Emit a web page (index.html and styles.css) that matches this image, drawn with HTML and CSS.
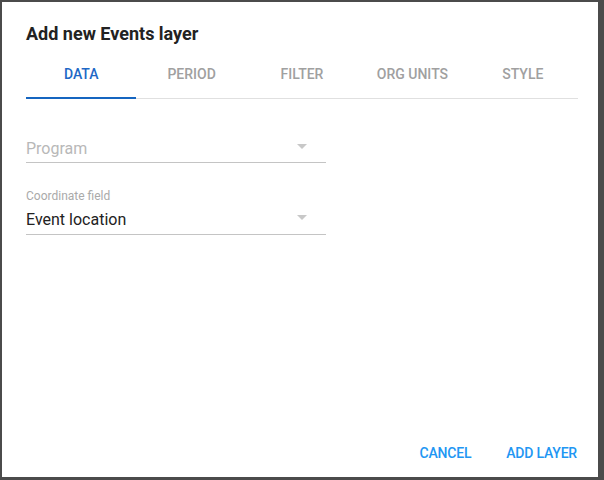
FILE: index.html
```html
<!DOCTYPE html>
<html>
<head>
<meta charset="utf-8">
<link rel="stylesheet" href="styles.css">
</head>
<body>
<div class="backdrop">
  <div class="dialog">
    <h1 class="title">Add new Events layer</h1>
    <div class="tabs">
      <div class="tab active">DATA</div>
      <div class="tab">PERIOD</div>
      <div class="tab">FILTER</div>
      <div class="tab">ORG UNITS</div>
      <div class="tab">STYLE</div>
    </div>
    <div class="content">
      <div class="field">
        <div class="select">
          <span class="placeholder">Program</span>
          <svg class="arrow" width="10" height="5" viewBox="0 0 10 5"><path d="M0 0h10L5 5z" fill="#c8c8c8"/></svg>
        </div>
      </div>
      <div class="field labelled">
        <div class="label">Coordinate field</div>
        <div class="select">
          <span class="value">Event location</span>
          <svg class="arrow" width="10" height="5" viewBox="0 0 10 5"><path d="M0 0h10L5 5z" fill="#c8c8c8"/></svg>
        </div>
      </div>
    </div>
    <div class="actions">
      <button class="btn">CANCEL</button>
      <button class="btn">ADD LAYER</button>
    </div>
  </div>
</div>
</body>
</html>
```
FILE: styles.css
```css
html, body {
  margin: 0;
  padding: 0;
  height: 100%;
}
body {
  background: #4b4b4b;
  font-family: Roboto, "Noto Sans", sans-serif;
}
.backdrop {
  height: 100%;
  box-sizing: border-box;
  padding: 2px 6px 3px 2px;
  display: flex;
}
.dialog {
  flex: 1;
  background: #fff;
  display: flex;
  flex-direction: column;
  padding: 0 20px 0 24px;
}
.title {
  margin: 0;
  padding-top: 20px;
  font-size: 18px;
  font-weight: 700;
  line-height: 24px;
  color: #222;
}
.tabs {
  margin-top: 16px;
  display: flex;
  border-bottom: 1px solid #e0e0e0;
}
.tab {
  flex: 1;
  text-align: center;
  font-size: 14px;
  font-weight: 500;
  color: #a0a0a0;
  height: 36px;
  line-height: 20px;
  padding-top: 2px;
  box-sizing: border-box;
}
.tab.active {
  color: #1e68c6;
  border-bottom: 2px solid #1565c0;
  margin-bottom: -1px;
  height: 37px;
}
.content {
  flex: 1;
  padding-top: 35px;
}
.field {
  width: 300px;
}
.labelled {
  margin-top: 26px;
}
.label {
  font-size: 12px;
  color: #aaa;
  line-height: 14px;
  margin-bottom: 2px;
}
.select {
  display: flex;
  align-items: center;
  justify-content: space-between;
  border-bottom: 1px solid #c4c4c4;
  padding: 5px 0 3px;
  line-height: 20px;
  font-size: 16px;
}
.labelled .select {
  padding-bottom: 4px;
}
.placeholder {
  color: #b8b8b8;
}
.value {
  color: #222;
}
.arrow {
  margin-right: 19px;
  margin-top: -5px;
}
.actions {
  display: flex;
  justify-content: flex-end;
  gap: 35px;
  padding: 0 1px 14px 0;
}
.btn {
  border: 0;
  background: none;
  padding: 0;
  font-family: Roboto, sans-serif;
  font-size: 14px;
  letter-spacing: -0.2px;
  font-weight: 500;
  color: #2196f3;
  line-height: 20px;
}
```
